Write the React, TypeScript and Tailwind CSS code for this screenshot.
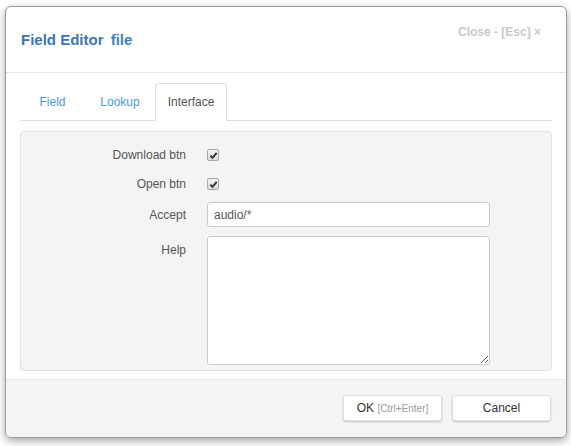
import React, { useState } from 'react';

const CheckBox: React.FC<{ checked: boolean; onToggle: () => void }> = ({ checked, onToggle }) => (
  <button
    type="button"
    onClick={onToggle}
    className="flex h-[12px] w-[12px] items-center justify-center rounded-[2px] border border-[#a8a8a8] bg-gradient-to-b from-[#f4f4f4] to-[#dcdcdc]"
  >
    {checked && (
      <svg viewBox="0 0 10 10" className="h-[9px] w-[9px]">
        <path d="M1.5 5.2 L3.8 7.6 L8.6 2" fill="none" stroke="#333" strokeWidth="2.2" />
      </svg>
    )}
  </button>
);

const tabs = [
  { name: 'Field', w: 'w-[65px]' },
  { name: 'Lookup', w: 'w-[70px]' },
  { name: 'Interface', w: 'w-[72px]' },
];

export default function App() {
  const [active, setActive] = useState('Interface');
  const [download, setDownload] = useState(true);
  const [open, setOpen] = useState(true);

  return (
    <div className="h-[446px] w-[571px] bg-white pl-[5px] pt-[6px] font-['Liberation_Sans',Arial,sans-serif]">
      <div className="flex h-[432px] w-[562px] flex-col overflow-hidden rounded-[6px] border border-[#9a9a9a] bg-white shadow-[0_3px_8px_rgba(0,0,0,0.35)]">
        {/* header */}
        <div className="flex h-[66px] shrink-0 items-start justify-between border-b border-[#e5e5e5] pl-[15px] pr-[25px]">
          <h1 className="mt-[22px] text-[15px] font-bold text-[#3b77b3]">
            Field Editor <span className="ml-[3px] text-[#4080c0]">file</span>
          </h1>
          <span className="mt-[16px] text-[12px] font-bold text-[#c8c8c8]">Close - [Esc] ×</span>
        </div>

        {/* body */}
        <div className="flex flex-1 flex-col px-[14px] pb-[8px] pt-[10px]">
          <div className="flex h-[38px] border-b border-[#dddddd]">
            {tabs.map((t) => (
              <button
                key={t.name}
                onClick={() => setActive(t.name)}
                className={`${t.w} -mb-px flex items-center justify-center rounded-t-[4px] text-[12px] ${
                  active === t.name
                    ? 'border border-[#dddddd] border-b-white bg-white text-[#555]'
                    : 'text-[#4a9be0]'
                }`}
              >
                {t.name}
              </button>
            ))}
          </div>

          <div className="mt-[10px] flex-1 rounded-[4px] border border-[#e3e3e3] bg-[#f4f4f4] pt-[16px]">
            <div className="grid grid-cols-[165px_283px] gap-x-[21px] text-[12px] text-[#555]">
              <div className="flex h-[14px] items-center justify-end">Download btn</div>
              <div className="flex h-[14px] items-center">
                <CheckBox checked={download} onToggle={() => setDownload(!download)} />
              </div>

              <div className="mt-[15px] flex h-[14px] items-center justify-end">Open btn</div>
              <div className="mt-[15px] flex h-[14px] items-center">
                <CheckBox checked={open} onToggle={() => setOpen(!open)} />
              </div>

              <div className="mt-[11px] flex h-[25px] items-center justify-end">Accept</div>
              <input
                defaultValue="audio/*"
                className="mt-[11px] h-[25px] rounded-[3px] border border-[#cccccc] bg-white px-[6px] text-[12px] text-[#555] outline-none"
              />

              <div className="mt-[9px] pt-[5px] text-right">Help</div>
              <textarea className="mt-[9px] h-[129px] resize-y rounded-[3px] border border-[#cccccc] bg-white px-[6px] py-[4px] text-[12px] text-[#555] outline-none" />
            </div>
          </div>
        </div>

        {/* footer */}
        <div className="flex h-[58px] shrink-0 items-center justify-end gap-[10px] border-t border-[#e5e5e5] bg-[#f4f4f4] pr-[15px]">
          <button className="mb-[2px] h-[26px] w-[99px] rounded-[3px] border border-[#e0e0e0] bg-white text-[12px] text-[#333] shadow-[0_1px_2px_rgba(0,0,0,0.2)]">
            OK <span className="text-[10px] text-[#999]">[Ctrl+Enter]</span>
          </button>
          <button className="mb-[2px] h-[26px] w-[99px] rounded-[3px] border border-[#e0e0e0] bg-white text-[12px] text-[#333] shadow-[0_1px_2px_rgba(0,0,0,0.2)]">
            Cancel
          </button>
        </div>
      </div>
    </div>
  );
}
